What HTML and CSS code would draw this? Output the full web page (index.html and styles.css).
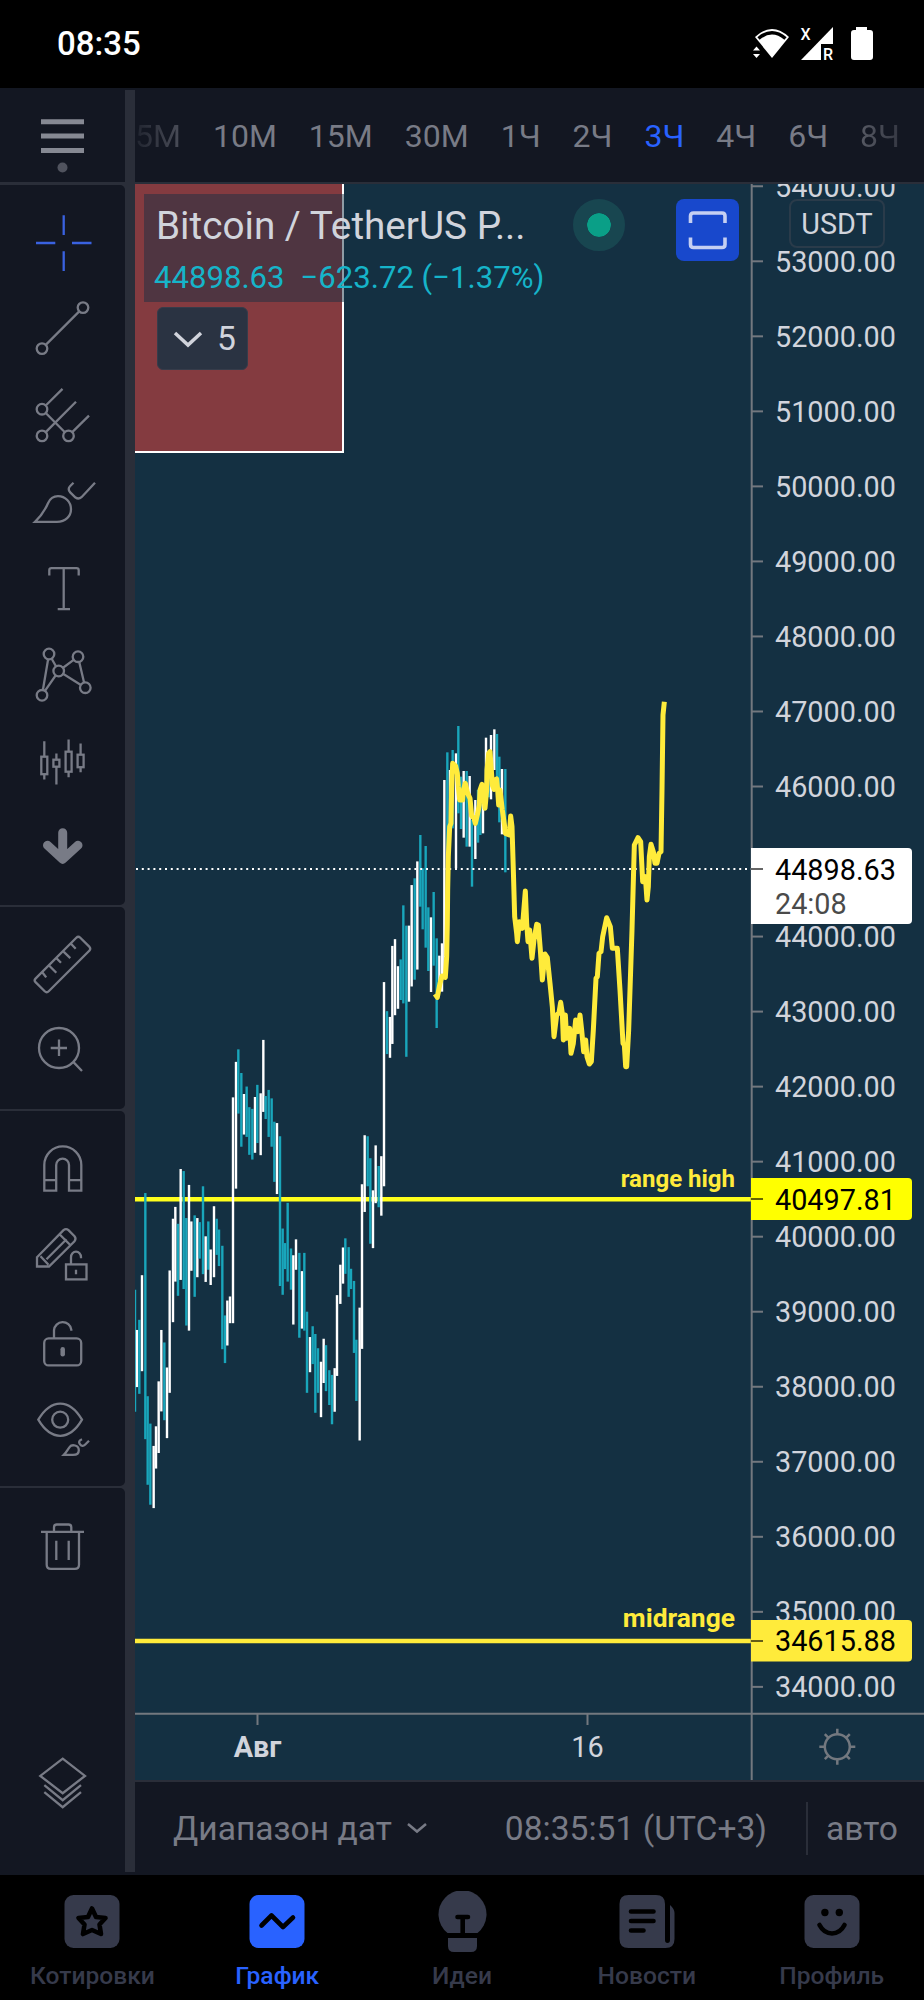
FILE: index.html
```
<!DOCTYPE html>
<html lang="ru">
<head>
    <meta charset="UTF-8">
    <meta name="viewport" content="width=device-width, initial-scale=1.0">
    <title>Bitcoin / TetherUS</title>
    <link rel="stylesheet" href="styles.css">
</head>
<body>
    <header class="status">
        <span class="clock">08:35</span>
        <svg class="status-icons" width="124" height="40" viewBox="0 0 124 40">
            <path d="M5 13 Q22 -3 39 13 L22 34 Z" fill="#fff"/>
            <path d="M8.5 14.5 Q22 3 35.500 14.500" fill="none" stroke="#000" stroke-width="3.500"/>
            <path d="M3 20 L10 28 L3 36 Z" fill="#000"/>
            <path d="M3 26.500 l3.500 -4 l3.500 4 Z M3 30 l3.500 4 l3.500 -4 Z" fill="#fff"/>
            <path d="M83 3 V36 H51 Z" fill="#fff"/>
            <path d="M71 20 H84 V37 H71 Z" fill="#000"/>
            <text x="50.500" y="16" class="sim">X</text>
            <text x="73" y="36" class="sim">R</text>
            <path d="M106 6 V3 H117 V6 H120 Q123 6 123 9 V33 Q123 36 120 36 H104 Q101 36 101 33 V9 Q101 6 104 6 Z" fill="#fff"/>
        </svg>
    </header>

    <main class="workspace">
        <aside class="tools">
            <div class="group menu">
                <svg width="86" height="92" viewBox="0 0 86 92">
                    <path d="M21 31.700 H64 M21 46 H64 M21 60.500 H64" stroke="#868993" stroke-width="5"/>
                    <circle cx="42.500" cy="77.500" r="5" fill="#50535e"/>
                </svg>
            </div>
            <div class="group drawing">
                <svg class="icon active" viewBox="0 0 86 86"><path d="M16 42.800 H35.300 M52 42.800 H71.500 M43.700 15 V34.800 M43.700 51 V70.700"/></svg>
                <svg class="icon" viewBox="0 0 86 86"><path d="M26 58.400 L59 25.400"/><circle cx="22" cy="62.400" r="5.300"/><circle cx="63" cy="21.400" r="5.300"/></svg>
                <svg class="icon" viewBox="0 0 86 86"><path d="M26 32 L42.500 15.700 M26 40 L44.600 58.800 M26 58.700 L56 28.500 M52.500 58.700 L69 42.500"/><circle cx="22" cy="36" r="5.300"/><circle cx="22" cy="62.700" r="5.300"/><circle cx="48.500" cy="62.700" r="5.300"/></svg>
                <svg class="icon" viewBox="0 0 86 86"><path d="M15 62.600 C22 56 25 51 28 44 C30 39.500 33.500 37 38 37 C45.500 37 51 43 51 50 C51 57 45.500 62.600 37 62.600 Z M53.500 23.500 L50 27 Q47.500 29.500 50 33 L55.500 38.300 Q58.500 40.500 61.500 38 L75 23.500"/></svg>
                <svg class="icon" viewBox="0 0 86 86"><path d="M29.300 29.200 V24 Q29.300 21.900 31.500 21.900 H56.500 Q58.700 21.900 58.700 24 V29.200 M43.700 21.900 V62.900 M37.700 62.900 H50"/></svg>
                <svg class="icon" viewBox="0 0 86 86"><path d="M22 63 L29 21.800 L38.700 38.800 L58 24.500 L65.300 55.500 L38.700 38.800 Z"/><circle cx="29" cy="21.800" r="5.300"/><circle cx="58" cy="24.500" r="5.300"/><circle cx="38.700" cy="38.800" r="5.300"/><circle cx="65.300" cy="55.500" r="5.300"/><circle cx="22" cy="63.100" r="5.300"/></svg>
                <svg class="icon" viewBox="0 0 86 86"><path d="M24.300 23 V61.400 M36.400 35.400 V66.400 M48.600 21.400 V59 M60.600 25.400 V54"/><rect x="21.300" y="38.500" width="6" height="17.500"/><rect x="33.400" y="41.500" width="6" height="7"/><rect x="45.600" y="33.500" width="6" height="20"/><rect x="57.600" y="36.500" width="6" height="12.500"/></svg>
                <svg class="icon bold" viewBox="0 0 86 86"><path d="M42.700 27.500 V52 M27.500 40 L42.700 54 L58 40"/></svg>
            </div>
            <div class="group">
                <svg class="icon" viewBox="0 0 86 86"><path d="M56.300 16.500 Q58.300 14.500 60.300 16.500 L69.500 25.700 Q71 27.500 69.500 29.300 L28.700 70 Q26.700 72 24.700 70 L15.500 61 Q13.800 59.200 15.500 57.400 Z M22.300 51 L26.200 56.200 M29.300 44.500 L36.300 51.500 M36.500 37 L41 41.500 M43.300 30.200 L50.300 37 M51 22.500 L55.700 27.500"/></svg>
                <svg class="icon" viewBox="0 0 86 86"><circle cx="39" cy="39.800" r="20"/><path d="M30.700 39.800 H47 M39 31.400 V47.800 M53 53.400 L62 62.800"/></svg>
            </div>
            <div class="group">
                <svg class="icon" viewBox="0 0 86 86"><path d="M24.300 64.500 V38.700 A18.500 18.500 0 0 1 61.300 38.700 V64.500 H49 V38.800 A6.400 6.400 0 0 0 36.200 38.800 V64.500 Z M24.300 54 H36.200 M49 54 H61.300"/></svg>
                <svg class="icon" viewBox="0 0 86 86"><path d="M17 45 L43.500 18 Q46 15.800 48.500 18 L54.500 24 Q56.500 26.500 54.500 29 L29 54.300 H17 Z M20.500 44 L28.500 52.500 M26.500 47 L46.500 27 M39.500 22 L50.500 33"/><rect x="46" y="52.200" width="20.500" height="15"/><path d="M51 52 V45 A5 5.500 0 0 1 61 45 V46 M56 57.500 V62"/></svg>
                <svg class="icon" viewBox="0 0 86 86"><rect x="24.200" y="40.200" width="37" height="27" rx="4.500"/><path d="M34 40 V32 A8.700 8.700 0 0 1 51.300 31.500 V32.500"/><path class="key" d="M42.700 51 V56"/></svg>
                <svg class="icon" viewBox="0 0 86 86"><path d="M18.300 34.500 C31 13 49.500 13 62 34.500 C49.500 56 31 56 18.300 34.500 Z"/><circle cx="40.200" cy="34.500" r="8"/><path d="M43.800 69.700 C47 66.500 47.500 64.500 49.500 62 C52 58.500 58.800 60 58.800 65 C58.800 68 56.500 69.700 53 69.700 Z M62 54 Q57.500 56 60 59 Q62.500 62 65 59.500 L69 55.500"/></svg>
            </div>
            <div class="group last">
                <svg class="icon" viewBox="0 0 86 86"><path d="M21 28.700 H64 M34 28.500 V24 Q34 21.300 36.700 21.300 H48.600 Q51.300 21.300 51.300 24 V28.500 M26.700 28.700 V61.500 Q26.700 65.700 30.900 65.700 H54.800 Q59 65.700 59 61.500 V28.700 M36.300 37.500 V56.700 M48.700 37.500 V56.700"/></svg>
                <svg class="icon layers" viewBox="0 0 86 86"><path d="M42.700 18.500 L65 35.700 L42.700 53 L20.300 35.700 Z M24.300 45 L42.700 60 L61 45 M24.300 52 L42.700 67 L61 52"/></svg>
            </div>
        </aside>

        <div class="content">
            <nav class="intervals">
                <span>5М</span>
                <span>10М</span>
                <span>15М</span>
                <span>30М</span>
                <span>1Ч</span>
                <span>2Ч</span>
                <span class="selected">3Ч</span>
                <span>4Ч</span>
                <span>6Ч</span>
                <span>8Ч</span>
            </nav>

            <section class="chart">
                <svg id="chart" width="789" height="1596" viewBox="135 184 789 1596">
                    <rect x="130" y="180" width="213" height="272" fill="#843b40" stroke="#fff" stroke-width="2"/>
                    <path d="M135 1199.300 H752" stroke="#ffff1c" stroke-width="4.600"/>
                    <path d="M135 1641 H752" stroke="#ffeb3b" stroke-width="4.600"/>
                    <g id="bars"></g>
                    <path d="M136 869 H751" stroke="#fff" stroke-width="2" stroke-dasharray="2 3.800"/>
                    <path id="forecast" fill="none" stroke="#ffeb3b" stroke-width="5" stroke-linejoin="round" transform="translate(420 690)"/>
                    <text class="line-name" x="735" y="1187">range high</text>
                    <text class="line-name mid" x="735" y="1626.500">midrange</text>
                    <path d="M751.700 184 V1780 M135 1713.700 H924 M257.500 1714 V1725 M587.500 1714 V1725" stroke="#73787f" stroke-width="2"/>
                    <g id="axis"></g>
                    <path d="M751 848 H908 Q912 848 912 852 V920 Q912 924 908 924 H751 Z" fill="#fff"/>
                    <path d="M751 1178 H908 Q912 1178 912 1182 V1216 Q912 1220 908 1220 H751 Z" fill="#ff0"/>
                    <path d="M751 1620 H908 Q912 1620 912 1624 V1657.500 Q912 1661.500 908 1661.500 H751 Z" fill="#ffeb3b"/>
                    <path d="M751 869 H763 M751 1199 H763 M751 1641 H763" stroke="#000" stroke-opacity=".6" stroke-width="2"/>
                    <text class="price dark" x="775" y="879.800">44898.63</text>
                    <text class="price countdown" x="775" y="913.800">24:08</text>
                    <text class="price dark" x="775" y="1209.800">40497.81</text>
                    <text class="price dark" x="775" y="1651.300">34615.88</text>
                    <text class="price month" x="257.500" y="1757">Авг</text>
                    <text class="price day" x="587.500" y="1757">16</text>
                    <g fill="none" stroke="#73787f" stroke-width="2.500" transform="translate(837.300 1746.700)">
                        <circle r="12.500"/>
                        <path d="M0 -13 V-18 M0 13 V18 M-13 0 H-18 M13 0 H18 M-9 -9 L-12.500 -12.500 M9 -9 L12.500 -12.500 M-9 9 L-12.500 12.500 M9 9 L12.500 12.500"/>
                    </g>
                </svg>

                <div class="legend">
                    <div class="symbol">Bitcoin / TetherUS P...</div>
                    <div class="quote"><span>44898.63</span><span>−623.72 (−1.37%)</span></div>
                </div>
                <div class="market-open"></div>
                <div class="fullscreen">
                    <svg width="63" height="63" viewBox="0 0 63 63"><path d="M14.500 24 V17 Q14.500 14 17.500 14 H46 Q49 14 49 17 V24 M14.500 38.500 V45.500 Q14.500 48.500 17.500 48.500 H46 Q49 48.500 49 45.500 V38.500" fill="none" stroke="#c5cff2" stroke-width="3.600"/></svg>
                </div>
                <div class="indicators">
                    <svg width="30" height="18" viewBox="0 0 30 18"><path d="M2 3 L15 15 L28 3" fill="none" stroke="#d1d4dc" stroke-width="3.500"/></svg>
                    <span>5</span>
                </div>
                <div class="currency">USDT</div>
            </section>

            <footer class="range-bar">
                <span class="range">Диапазон дат</span>
                <svg class="chevron" width="20" height="12" viewBox="0 0 20 12"><path d="M1 2 L10 9.500 L19 2" fill="none" stroke="#787b86" stroke-width="2.500"/></svg>
                <span class="time">08:35:51 (UTC+3)</span>
                <span class="auto">авто</span>
            </footer>
        </div>
    </main>

    <nav class="tabs">
        <div class="tab">
            <svg width="56" height="62" viewBox="0 0 56 62"><rect y="4" x=".5" width="55" height="53" rx="9"/><path class="cut" d="M28 17.500 L32 26 L41.500 27 L35.500 33.500 L37 43 L28 39 L19 43 L20.500 33.500 L14.500 27 L24 26 Z"/></svg>
            <span>Котировки</span>
        </div>
        <div class="tab current">
            <svg width="56" height="62" viewBox="0 0 56 62"><rect y="4" x=".5" width="55" height="53" rx="9"/><path class="cut" d="M12.500 34.500 L22.500 24.500 L34 36 L44 26.500"/></svg>
            <span>График</span>
        </div>
        <div class="tab">
            <svg width="56" height="62" viewBox="0 0 56 62"><path d="M13.500 42 A24 24 0 1 1 43.500 42 Z"/><path d="M14 47 H43 V55 Q43 61 37 61 H20 Q14 61 14 55 Z"/><path class="cut" d="M23.500 26 H34 M28.700 26 V42"/></svg>
            <span>Идеи</span>
        </div>
        <div class="tab">
            <svg width="56" height="62" viewBox="0 0 56 62"><path d="M9.500 4 H37 Q46 4 46 13 V49 Q46 52 48.500 52 Q51 52 51 49 V14 Q55.500 18 55.500 22 V48 Q55.500 57 46.500 57 H9.500 Q.5 57 .5 48 V13 Q.5 4 9.500 4 Z"/><path class="cut" d="M12 20.500 H34.500 M12 30 H34.500 M12 39.500 H24.500"/></svg>
            <span>Новости</span>
        </div>
        <div class="tab">
            <svg width="56" height="62" viewBox="0 0 56 62"><rect y="4" x=".5" width="55" height="53" rx="9"/><path class="cut" d="M15.500 34 Q20 42.500 28 42.500 Q36 42.500 40.500 34"/><circle cx="20.900" cy="21.500" r="3.700" fill="#000"/><circle cx="35.300" cy="21.500" r="3.700" fill="#000"/></svg>
            <span>Профиль</span>
        </div>
    </nav>

    <script src="chart.js"></script>
</body>
</html>
```

FILE: styles.css
```
body {
    background-color: #000;
    color: #787b86;
    font-family: Roboto, sans-serif;
    margin: 0;
    width: 924px;
    height: 2000px;
    overflow: hidden;
}

.status {
    display: flex;
    align-items: center;
    justify-content: space-between;
    box-sizing: border-box;
    height: 88px;
    padding: 0 50px 0 57px;
    color: #fff;
}

.clock {
    padding-bottom: 1px;
    font-size: 33px;
    font-weight: 500;
}

.sim {
    fill: #fff;
    font-size: 16px;
    font-weight: 500;
}

.workspace {
    display: flex;
    height: 1787px;
    background-color: #131722;
}

/* left drawing toolbar */
.tools {
    display: flex;
    flex-direction: column;
    gap: 2.5px;
    width: 125px;
    height: 1782px;
    margin-top: 2px;
    padding-right: 10px;
    background-color: #2a2e39;
}

.group {
    display: flex;
    flex-direction: column;
    padding: 14.3px 0 14.6px 20px;
    border-radius: 0 5px 5px 0;
    background-color: #131722;
}

.group.menu {
    padding-top: 0;
    padding-bottom: 0;
    border-radius: 0;
}

.group.drawing {
    padding-top: 15.500px;
    padding-bottom: 13.5px;
}

.group.last {
    flex: 1;
    padding-top: 15px;
    padding-bottom: 46px;
    border-radius: 0 5px 0 0;
}

.icon {
    width: 86px;
    height: 86.4px;
    fill: #131722;
    stroke: #787b86;
    stroke-width: 2.3;
}

.icon path {
    fill: none;
}

.icon.active {
    stroke: #3a62e0;
}

.icon.bold {
    stroke-width: 9;
    stroke-linejoin: round;
    stroke-linecap: round;
}

.icon .key {
    stroke-width: 4.5;
    stroke-linecap: round;
}

.icon.layers {
    margin-top: auto;
}

.content {
    width: 789px;
}

.intervals {
    display: flex;
    align-items: center;
    gap: 32px;
    height: 96px;
    padding-top: 1px;
    box-sizing: border-box;
    border-bottom: 2px solid #2a2e39;
    font-size: 32px;
    white-space: nowrap;
}

.intervals span:first-child {
    background: linear-gradient(90deg, #20242f, #4a4d58);
    -webkit-background-clip: text;
    background-clip: text;
    color: transparent;
}

.intervals span:last-child {
    background: linear-gradient(90deg, #565963, #353843);
    -webkit-background-clip: text;
    background-clip: text;
    color: transparent;
}

.intervals .selected {
    color: #2962ff;
}

.chart {
    position: relative;
    height: 1596px;
    background-color: #143042;
    border-bottom: 2px solid #2a2e39;
}

#chart {
    display: block;
}

.price {
    fill: #d1d4dc;
    font-size: 28.8px;
}

.price.dark {
    fill: #000;
}

.price.countdown {
    fill: #4a4a4a;
}

.price.month,
.price.day {
    text-anchor: middle;
}

.price.month {
    font-weight: bold;
}

.line-name {
    fill: #ffeb3b;
    font-size: 24px;
    font-weight: bold;
    text-anchor: end;
}

.line-name.mid {
    font-size: 26.4px;
}

.bar {
    stroke: #19a6bb;
    stroke-width: 2.4;
}

.bar.up {
    stroke: #fff;
}

/* panels over the chart */
.legend {
    position: absolute;
    left: 9px;
    top: 10px;
    width: 407px;
    height: 108px;
    box-sizing: border-box;
    padding: 9px 0 0 10px;
    background-color: rgba(20, 48, 66, 0.48);
    white-space: nowrap;
}

.symbol {
    padding-left: 2px;
    color: #d1d4dc;
    font-size: 38.7px;
    line-height: 45px;
}

.quote {
    display: flex;
    gap: 16px;
    margin-top: 11px;
    color: #16b4c9;
    font-size: 31.1px;
    line-height: 38px;
}

.market-open {
    position: absolute;
    left: 438px;
    top: 15px;
    width: 24px;
    height: 24px;
    border: 14px solid #184650;
    border-radius: 50%;
    background-color: #0a9f87;
    background-clip: padding-box;
}

.fullscreen {
    position: absolute;
    left: 541px;
    top: 15px;
    width: 63px;
    height: 62px;
    border-radius: 8px;
    background-color: #1848cc;
}

.indicators {
    position: absolute;
    left: 22px;
    top: 123px;
    display: flex;
    align-items: center;
    gap: 14px;
    width: 91px;
    height: 63px;
    box-sizing: border-box;
    padding-left: 15px;
    border: 1px solid #363c4a;
    border-radius: 6px;
    background-color: #2a3342;
    color: #d1d4dc;
    font-size: 33.6px;
}

.currency {
    position: absolute;
    left: 654px;
    top: 15px;
    width: 96px;
    height: 49px;
    box-sizing: border-box;
    border: 2px solid #2a3b4a;
    border-radius: 8px;
    background-color: #143042;
    color: #d1d4dc;
    font-size: 28.8px;
    line-height: 46px;
    text-align: center;
}

.range-bar {
    display: flex;
    align-items: center;
    height: 92px;
    padding-left: 38px;
    font-size: 33.6px;
    white-space: nowrap;
}

.chevron {
    margin-left: 15px;
}

.time {
    margin-left: 78px;
}

.auto {
    margin-left: 39px;
    padding-left: 18px;
    border-left: 2px solid #2a2e39;
    line-height: 53px;
}

.tabs {
    display: grid;
    grid-template-columns: repeat(5, 1fr);
    height: 125px;
}

.tab {
    display: flex;
    flex-direction: column;
    align-items: center;
    padding-top: 16px;
    color: #363a4b;
    fill: #363a4b;
    font-size: 24.6px;
    font-weight: 500;
}

.tab span {
    margin-top: 8px;
}

.tab.current {
    color: #2962ff;
    fill: #2962ff;
}

.cut {
    fill: none;
    stroke: #000;
    stroke-width: 4.6;
    stroke-linecap: round;
    stroke-linejoin: round;
}
```

FILE: chart.js
```
const SVG = 'http://www.w3.org/2000/svg';

function add(parent, tag, attrs, text) {
    const el = document.createElementNS(SVG, tag);
    for (const key in attrs) el.setAttribute(key, attrs[key]);
    if (text) el.textContent = text;
    parent.appendChild(el);
}

// Шкала цены
const axis = document.getElementById('axis');
for (let price = 54000; price >= 34000; price -= 1000) {
    const y = 261.3 + (53000 - price) * 0.07503;
    add(axis, 'path', { d: `M752 ${y} H763`, stroke: '#73787f', 'stroke-width': 2 });
    add(axis, 'text', { x: 775, y: y + 10.6, class: 'price' }, price.toFixed(2));
}

// Бары: x, верх, низ, рост (1) или падение (0)
const july = [
    [15,857,1218,0],[21,976,1145,1],[28,946,1165,0],[36,814,1098,1],[46,571,1299,0],[53,1172,1434,0],
    [61,1253,1493,0],[71,1319,1503,1],[78,1261,1386,1],[86,1128,1340,1],[94,976,1217,1],[103,1013,1243,0],
    [111,1087,1296,1],[119,800,1162,1],[129,647,953,1],[136,612,833,1],[144,662,875,0],[152,500,828,1],
    [161,506,855,0],[169,645,963,0],[177,547,978,1],[184,655,801,1],[194,637,878,0],[202,645,820,1],
    [209,657,765,0],[219,551,811,0],[227,699,834,1],[235,655,798,0],[242,738,843,1],[252,610,820,1],
    [260,647,754,0],[267,679,787,0],[277,727,1033,0],[285,933,1074,0],[292,889,1022,1],[300,877,956,1],
    [309,288,956,1],[318,183,558,1],[325,146,336,0],[334,216,434,0],[342,278,398,1],[350,256,405,0],
    [358,317,458,0],[367,322,472,0],[375,287,452,1],[382,251,423,0],[392,276,459,1],[400,118,331,1],
    [407,284,352,0],[416,266,405,0],[425,291,434,0],[433,360,538,0],[441,364,574,1],[450,403,846,0],
    [458,676,872,0],[465,719,796,0],[473,600,833,0],[483,735,857,0],[490,755,960,1],[498,708,798,1],
    [508,748,999,0],[516,802,972,1],[523,748,978,0],[531,922,1162,0],[540,997,1101,1],[548,965,1077,0],
    [556,988,1221,0],[564,1030,1162,0],[573,1070,1234,1],[581,1002,1133,1],[588,1021,1157,0],[598,1095,1198,0],
    [606,1109,1255,0],[614,1089,1218,1],[621,873,1112,1],[631,783,899,1],[639,732,839,1],[646,705,810,0],
    [656,731,878,0],[663,795,855,0],[672,831,1044,0],[679,1005,1186,0],[689,910,1303,1],[696,545,1032,1],
    [704,400,627,1],[713,403,551,0],[721,468,721,0],[729,563,734,1],[737,430,601,1],[746,491,613,0],
    [754,462,638,1],[762,-53,551,1],[771,33,160,0],[780,50,171,1],[787,-160,130,1],[795,-180,45,1],
    [804,-100,26,1],[812,-120,0,0],[820,-280,10,0],[829,-220,168,0],[837,-220,5,1],[845,-340,-40,1],
    [854,-360,-60,0],[862,-410,-90,1]
];
const august = [
    [1,435,650,0],[8,535,718,0],[17,468,773,0],[25,652,843,0],[33,682,906,1],[41,606,827,0],[50,745,1014,0],
    [58,797,900,1],[66,760,905,1],[73,270,860,1],[82,187,500,0],[90,240,420,1],[98,180,415,0],[108,190,535,1],
    [115,108,370,0],[123,260,417,0],[131,243,443,1],[140,243,470,0],[149,258,470,1],[156,390,590,0],
    [166,330,507,1],[174,300,458,0],[181,290,435,0],[189,290,430,1],[198,143,340,1],[206,190,322,0],
    [213,135,328,1],[223,118,240,1],[231,132,290,0],[238,200,397,0],[246,237,433,1],[256,237,547,0]
];

function drawBars(list, left, top, scale) {
    const group = document.getElementById('bars');
    list.forEach(([x, high, low, up]) => {
        const px = left + x / 3;
        add(group, 'path', {
            d: `M${px} ${top + high / scale} V${top + low / scale}`,
            class: up ? 'bar up' : 'bar'
        });
    });
}
drawBars(july, 130, 1000, 2.958);
drawBars(august, 420, 690, 3);

// Прогноз
const forecast = [
    45,912, 52,922, 60,880, 66,858, 76,862, 80,800, 82,700, 83,600, 85,500, 89,410, 93,400, 95,290, 98,220,
    107,228, 112,250, 115,290, 119,330, 128,330, 130,300, 136,280, 143,310, 150,325, 155,378, 162,385, 166,400,
    172,375, 178,345, 180,300, 186,283, 190,300, 195,355, 200,300, 201,240, 206,190, 210,185, 214,240,
    217,285, 222,298, 226,270, 230,267, 233,300, 236,345, 240,300, 247,360, 254,410, 256,430, 268,435,
    272,378, 276,410, 280,540, 284,680, 290,730, 292,755, 298,695, 307,715, 316,603, 320,700, 324,755,
    329,720, 336,805, 342,750, 350,703, 355,705, 361,780, 367,870, 375,792, 382,803, 390,880, 397,950,
    402,1040, 410,975, 417,968, 422,937, 427,970, 430,1050, 436,975, 440,1045, 449,1015, 453,1090, 460,1060,
    467,990, 474,1025, 480,975, 485,1020, 491,1085, 497,1050, 501,1100, 508,1122, 514,1115, 520,1020,
    528,865, 532,860, 537,790, 543,785, 548,740, 560,683, 571,710, 577,775, 592,775, 600,900, 609,1060,
    613,1065, 617,1130, 620,1130, 626,1020, 636,720, 643,465, 654,443, 662,455, 668,575, 676,560, 681,630,
    685,590, 688,500, 693,463, 700,485, 705,520, 711,520, 717,490, 723,485, 726,300, 729,75, 733,35
];
let line = '';
for (let i = 0; i < forecast.length; i += 2) {
    line += `${i ? 'L' : 'M'}${forecast[i] / 3} ${forecast[i + 1] / 3}`;
}
document.getElementById('forecast').setAttribute('d', line);
```
